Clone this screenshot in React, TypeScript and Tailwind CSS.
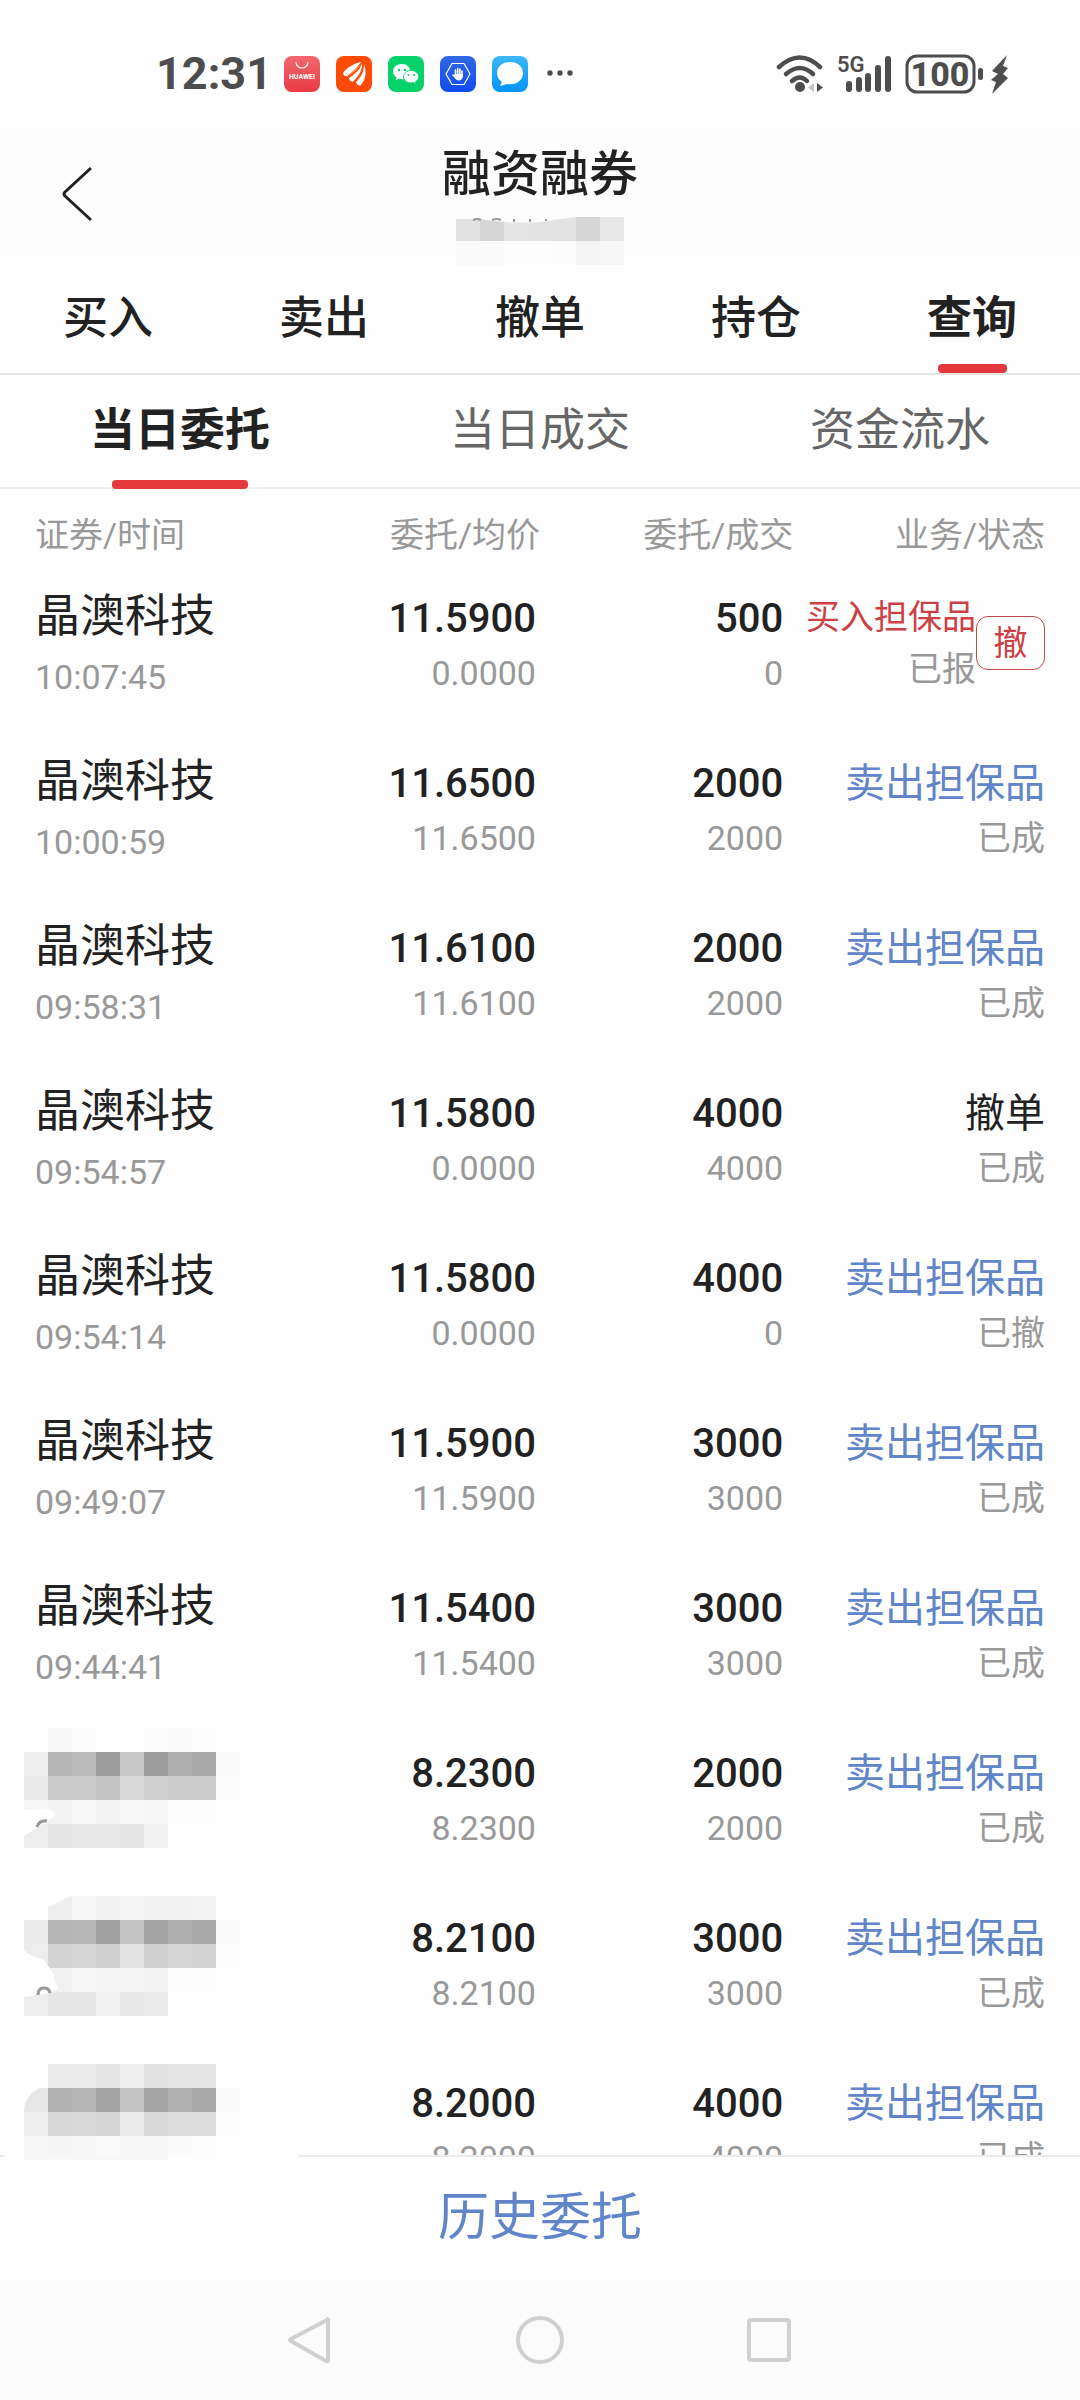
import { useState } from 'react';
import clsx from 'clsx';

type Shade = string | null;

interface Order {
  name: string;
  time: string;
  price: string;
  avgPrice: string;
  amount: string;
  filled: string;
  type: 'buy' | 'sell' | 'cancel';
  status: string;
  mask?: { top: number; rows: Shade[][]; cover: string; arc: string };
}

const TYPE_LABEL = { buy: '买入担保品', sell: '卖出担保品', cancel: '撤单' };

const stock = '晶澳科技';

const orders: Order[] = [
  { name: stock, time: '10:07:45', price: '11.5900', avgPrice: '0.0000', amount: '500', filled: '0', type: 'buy', status: '已报' },
  { name: stock, time: '10:00:59', price: '11.6500', avgPrice: '11.6500', amount: '2000', filled: '2000', type: 'sell', status: '已成' },
  { name: stock, time: '09:58:31', price: '11.6100', avgPrice: '11.6100', amount: '2000', filled: '2000', type: 'sell', status: '已成' },
  { name: stock, time: '09:54:57', price: '11.5800', avgPrice: '0.0000', amount: '4000', filled: '4000', type: 'cancel', status: '已成' },
  { name: stock, time: '09:54:14', price: '11.5800', avgPrice: '0.0000', amount: '4000', filled: '0', type: 'sell', status: '已撤' },
  { name: stock, time: '09:49:07', price: '11.5900', avgPrice: '11.5900', amount: '3000', filled: '3000', type: 'sell', status: '已成' },
  { name: stock, time: '09:44:41', price: '11.5400', avgPrice: '11.5400', amount: '3000', filled: '3000', type: 'sell', status: '已成' },
  {
    name: '',
    time: '',
    price: '8.2300',
    avgPrice: '8.2300',
    amount: '2000',
    filled: '2000',
    type: 'sell',
    status: '已成',
    mask: {
      top: -8,
      rows: [
        [null, '#f8f8f8', '#fbfbfb', null, null, '#fbfbfb', '#fafafa', '#fcfcfc', null],
        ['#ededed', '#b4b4b4', '#bababa', '#9e9e9e', '#c6c6c6', '#9c9c9c', '#aeaeae', '#a8a8a8', '#fafafa'],
        ['#e9e9e9', '#cbcbcb', '#cbcbcb', '#c5c5c5', '#dadada', '#d0d0d0', '#cdcdcd', '#cdcdcd', '#fbfbfb'],
        ['#f6f6f6', '#f3f3f3', '#f8f8f8', '#f4f4f4', '#f8f8f8', '#f6f6f6', '#fcfcfc', '#fcfcfc', null],
        ['#eeeeee', '#e4e4e4', '#e7e7e7', '#e7e7e7', '#e5e5e5', '#f0f0f0', null, null, null],
      ],
      cover: 'M0 82 Q24 83 50 81 L56 87 L46 94 L24 108 L0 120 Z',
      arc: 'M37 99 Q39 92 47 93',
    },
  },
  {
    name: '',
    time: '',
    price: '8.2100',
    avgPrice: '8.2100',
    amount: '3000',
    filled: '3000',
    type: 'sell',
    status: '已成',
    mask: {
      top: -5,
      rows: [
        [null, '#efefef', '#f6f6f6', '#f0f0f0', '#f5f5f5', '#f2f2f2', '#f0f0f0', '#f4f4f4', null],
        ['#ebebeb', '#b4b4b4', '#b8b8b8', '#a1a1a1', '#c4c4c4', '#a2a2a2', '#aeaeae', '#a8a8a8', '#fafafa'],
        ['#ededed', '#d3d3d3', '#d6d6d6', '#d0d0d0', '#e3e3e3', '#d0d0d0', '#d6d6d6', '#d2d2d2', '#fcfcfc'],
        ['#ffffff', '#f1f1f1', '#f6f6f6', '#f5f5f5', '#f5f5f5', '#f3f3f3', '#fdfdfd', '#fdfdfd', null],
        ['#eeeeee', '#e6e6e6', '#e6e6e6', '#f1f1f1', '#e8e8e8', '#ebebeb', null, null, null],
      ],
      cover: 'M0 48 L24 54 Q32 62 43 63 L54 78 L55 86 L58 92 L50 97 L24 101 L0 101 Z M48 11 L70 0 L48 0 Z',
      arc: 'M38 99 Q38 92 44 92 Q49 92 50 97',
    },
  },
  {
    name: '',
    time: '',
    price: '8.2000',
    avgPrice: '8.2000',
    amount: '4000',
    filled: '4000',
    type: 'sell',
    status: '已成',
    mask: {
      top: -2,
      rows: [
        [null, '#ebebeb', '#ebebeb', '#e5e5e5', '#eeeeee', '#e2e2e2', '#e5e5e5', '#e5e5e5', null],
        ['#e7e7e7', '#b2b2b2', '#b6b6b6', '#a3a3a3', '#c4c4c4', '#a5a5a5', '#b0b0b0', '#a9a9a9', '#fafafa'],
        ['#efefef', '#d7d7d7', '#dadada', '#d6d6d6', '#ebebeb', '#dadada', '#dcdcdc', '#dcdcdc', '#fcfcfc'],
        ['#f7f7f7', '#f5f5f5', '#f7f7f7', '#fafafa', '#f6f6f6', '#f7f7f7', '#fafafa', '#fcfcfc', null],
      ],
      cover: 'M20 22 L40 24 Q25 31 24 46 L20 48 Z',
      arc: '',
    },
  },
];

const headerMosaic: Shade[][] = [
  ['#e2e2e2', '#d5d5d5', '#e5e5e5', '#e3e3e3', '#e3e3e3', '#d6d6d6', '#e8e8e8'],
  ['#fafafa', '#fafafa', '#fdfdfd', '#fdfdfd', '#fbfbfb', '#f5f5f5', '#f7f7f7'],
];

function Tiles({ rows, x = 0 }: { rows: Shade[][]; x?: number }) {
  return (
    <>
      {rows.map((row, r) =>
        row.map((fill, c) => fill && <rect key={`${r}-${c}`} x={x + c * 24} y={r * 24} width="24" height="24" fill={fill} />)
      )}
    </>
  );
}

function MaskedName({ mask }: { mask: NonNullable<Order['mask']> }) {
  return (
    <svg className="block overflow-visible" width="240" height="112" viewBox="35 0 240 112" shapeRendering="crispEdges" aria-hidden="true">
      <g transform={`translate(0 ${mask.top})`}>
        <Tiles rows={mask.rows} x={24} />
        <path d={mask.cover} fill="#fff" shapeRendering="auto" />
        <path d={mask.arc} fill="none" stroke="#999" strokeWidth="3" shapeRendering="auto" />
      </g>
    </svg>
  );
}

function StatusBar() {
  return (
    <div className="flex h-[127px] items-center justify-between pt-5 pr-[71px] pl-[156px] text-[#4d4d4d]">
      <div className="flex items-center gap-4">
        <span className="w-28 text-[45px] font-bold leading-none">12:31</span>
        <svg width="36" height="36" viewBox="0 0 36 36">
          <defs>
            <linearGradient id="hw" x2="0" y2="1">
              <stop stopColor="#f0686d" />
              <stop offset="1" stopColor="#ea3b45" />
            </linearGradient>
          </defs>
          <rect width="36" height="36" rx="8" fill="url(#hw)" />
          <path d="M12 6 a6 6 0 0 0 12 0" fill="none" stroke="#fff" strokeWidth="1.2" />
          <text x="18" y="23" fontSize="7" fontWeight="700" fill="#fff" textAnchor="middle">HUAWEI</text>
        </svg>
        <svg width="36" height="36" viewBox="0 0 36 36">
          <rect width="36" height="36" rx="8" fill="#fd4a07" />
          <path d="M25 6 C17 8 10 12 7 17 Q8 21 12 20 C17 17 23 12 25 6Z" fill="#fff" />
          <path d="M26 7 C24 14 19 18 13 22 Q14 27 18 25 C24 20 27 14 26 7Z" fill="#fff" />
          <path d="M28 8 C28 16 25 21 20 26 Q22 31 25 29 C31 22 30 14 28 8Z" fill="#fff" />
          <path d="M25 7 C21 12 18 15 12 20 M27 8 C26 16 22 21 18 25" stroke="#fd4a07" strokeWidth="1" fill="none" />
        </svg>
        <svg width="36" height="36" viewBox="0 0 36 36">
          <rect width="36" height="36" rx="8" fill="#07d169" />
          <path d="M14 8 C9 8 5 11 5 15.500 C5 18 6.500 20 8.500 21.500 L8 24 L11 22.700 Q14 23.500 16 23 L22 14 C21 10 18 8 14 8Z" fill="#fff" />
          <path d="M23 14.500 C18.500 14.500 15.500 17.500 15.500 20.800 C15.500 24.500 19 27 23 27 L25.500 26.600 L28 28 L27.500 25.700 C29.500 24.500 30.800 22.800 30.800 20.800 C30.800 17.500 27.500 14.500 23 14.500Z" fill="#fff" stroke="#07d169" strokeWidth="0.900" />
          <g fill="#07d169">
            <circle cx="11" cy="14" r="1.200" />
            <circle cx="17" cy="14" r="1.200" />
            <circle cx="20.500" cy="19" r="1" />
            <circle cx="26" cy="19" r="1" />
          </g>
        </svg>
        <svg width="36" height="36" viewBox="0 0 36 36">
          <defs>
            <linearGradient id="guard" x2="0" y2="1">
              <stop stopColor="#3267e2" />
              <stop offset="1" stopColor="#104cf0" />
            </linearGradient>
          </defs>
          <rect width="36" height="36" rx="8" fill="url(#guard)" />
          <path d="M12 7.500 H24 L30 18 L24 28.500 H12 L6 18Z" fill="none" stroke="#fff" strokeWidth="1.200" strokeLinejoin="round" />
          <path d="M15.500 14 V20 M17.700 12.500 V20 M19.900 13 V20 M22 15 V20 M13 19 L16 22" stroke="#fff" strokeWidth="1.600" strokeLinecap="round" />
          <path d="M14.700 18 H22.800 V20.500 Q22 24.500 18.800 24.500 Q16 24.500 14 20.500Z" fill="#fff" />
        </svg>
        <svg width="36" height="36" viewBox="0 0 36 36">
          <defs>
            <linearGradient id="msg" x2="0" y2="1">
              <stop stopColor="#3cb8f8" />
              <stop offset="1" stopColor="#0593f7" />
            </linearGradient>
          </defs>
          <rect width="36" height="36" rx="8" fill="url(#msg)" />
          <path d="M18 6 C10.500 6 5 10.500 5 17 C5 21 7 24 10 26 L8 30 L15 28 C24 29.500 31 24.500 31 17 C31 10.500 25.500 6 18 6Z" fill="#fff" />
        </svg>
        <svg width="32" height="36" viewBox="0 0 32 36" fill="currentColor">
          <circle cx="6" cy="17" r="2.700" />
          <circle cx="16" cy="17" r="2.700" />
          <circle cx="26" cy="17" r="2.700" />
        </svg>
      </div>

      <div className="flex items-center gap-[14px]">
        <svg width="48" height="40" viewBox="0 0 48 40" fill="none" stroke="currentColor" strokeWidth="4.500" strokeLinecap="round">
          <path d="M3 13 Q24 -6 44 13" />
          <path d="M10 20 Q24 8 37 20" />
          <path d="M16 27 Q24 20 31 27" />
          <circle cx="24" cy="33" r="5" fill="currentColor" stroke="none" />
          <path d="M38 29 V38 L32 33.500Z" fill="#c4c4c4" stroke="none" />
          <path d="M41 29 V38 L47 33.500Z" fill="currentColor" stroke="none" />
        </svg>
        <svg width="53" height="40" viewBox="0 0 53 40" fill="currentColor">
          <text x="-1" y="18" fontSize="22" fontWeight="600">5G</text>
          <rect x="8" y="27" width="6" height="11" rx="3" />
          <rect x="18" y="23" width="6" height="15" rx="3" />
          <rect x="27" y="19" width="6" height="19" rx="3" />
          <rect x="37" y="11" width="6" height="27" rx="3" />
          <rect x="47" y="2" width="6" height="36" rx="3" />
        </svg>
        <svg width="104" height="40" viewBox="0 0 104 40" fill="currentColor">
          <rect x="2" y="2" width="67" height="36" rx="10" fill="none" stroke="currentColor" strokeWidth="3" />
          <text x="35" y="32" fontSize="34" fontWeight="800" textAnchor="middle">100</text>
          <rect x="73" y="14" width="5" height="12" rx="2.500" />
          <path d="M102 1 L87 17 L93 20 L86 26 L91 28 L87 40 L103 24 L98 20 L103 14 L98 12Z" />
        </svg>
      </div>
    </div>
  );
}

function Header() {
  return (
    <header className="grid h-[131px] grid-cols-3 items-center bg-[#fdfdfd]">
      <button type="button" aria-label="返回" className="justify-self-start pb-1 pl-[60px]">
        <svg width="32" height="56" viewBox="0 0 32 56" fill="none" stroke="#222" strokeWidth="3">
          <path d="M31 2 L5 26 Q3 28 5 30 L31 54" />
        </svg>
      </button>
      <div className="flex flex-col items-center gap-3 self-start pt-[18px]">
        <h1 className="text-[49px] font-medium leading-[60px] text-[#222]">融资融券</h1>
        <svg className="block" width="168" height="48" viewBox="0 0 168 48" shapeRendering="crispEdges" aria-hidden="true">
          <Tiles rows={headerMosaic} />
          <path d="M0 0 H120 Q95 3 84 5 Q50 7 24 2 L0 2Z" fill="#fdfdfd" shapeRendering="auto" />
          <path d="M17 3 Q21 1 25 3 M36 3 Q41 1 45 3 M58 2 V5 M74 2 V5 M90 2 V4" fill="none" stroke="#999" strokeWidth="2" shapeRendering="auto" />
        </svg>
      </div>
    </header>
  );
}

interface TabsProps {
  items: string[];
  active: string;
  onChange: (item: string) => void;
}

function MainTabs({ items, active, onChange }: TabsProps) {
  return (
    <nav className="grid h-[117px] grid-cols-5 border-b-2 border-[#e4e4e4]">
      {items.map((item) => (
        <button
          key={item}
          type="button"
          onClick={() => onChange(item)}
          className={clsx('relative pt-1.5 text-[45px] text-[#222]', item === active ? 'font-bold' : 'font-medium')}
        >
          {item}
          {item === active && <span className="absolute inset-x-0 bottom-0 mx-auto h-[9px] w-[69px] rounded-sm bg-[#e4393c]" />}
        </button>
      ))}
    </nav>
  );
}

function SubTabs({ items, active, onChange }: TabsProps) {
  return (
    <nav className="grid h-[114px] grid-cols-3 border-b-2 border-[#efefef]">
      {items.map((item) => (
        <button
          key={item}
          type="button"
          onClick={() => onChange(item)}
          className={clsx('relative text-[45px]', item === active ? 'font-bold text-[#222]' : 'text-[#666]')}
        >
          {item}
          {item === active && <span className="absolute inset-x-0 -bottom-0.5 mx-auto h-[9px] w-[136px] rounded-sm bg-[#e4393c]" />}
        </button>
      ))}
    </nav>
  );
}

function OrderRow({ order }: { order: Order }) {
  const pending = order.type === 'buy';
  return (
    <tr className="h-[165px] align-top">
      <td className="pl-[35px]">
        {order.mask ? (
          <MaskedName mask={order.mask} />
        ) : (
          <div className="pt-1.5">
            <div className="text-[45px] leading-[60px] text-[#222]">{order.name}</div>
            <div className="text-[34px] leading-[60px] text-[#999]">{order.time}</div>
          </div>
        )}
      </td>
      <td className="pt-2.5 pr-1 text-right">
        <div className="text-[40px] font-medium leading-[56px] text-[#222]">{order.price}</div>
        <div className="text-[34px] leading-[52px] text-[#999]">{order.avgPrice}</div>
      </td>
      <td className="pt-2.5 pr-4 text-right">
        <div className="text-[40px] font-medium leading-[56px] text-[#222]">{order.amount}</div>
        <div className="text-[34px] leading-[52px] text-[#999]">{order.filled}</div>
      </td>
      <td className="pt-2.5 pr-[35px] text-right whitespace-nowrap">
        {pending ? (
          <div className="flex items-center justify-end">
            <div className="text-[34px] leading-[52px]">
              <div className="text-[#cb4144]">{TYPE_LABEL[order.type]}</div>
              <div className="text-[#999]">{order.status}</div>
            </div>
            <button type="button" className="h-[54px] w-[69px] shrink-0 rounded-xl border border-[#c24a4d] text-[34px] leading-none text-[#cb4144]">
              撤
            </button>
          </div>
        ) : (
          <>
            <div className={clsx('text-[40px] leading-[56px]', order.type === 'sell' ? 'text-[#6085c8]' : 'text-[#222]')}>
              {TYPE_LABEL[order.type]}
            </div>
            <div className="text-[34px] leading-[52px] text-[#999]">{order.status}</div>
          </>
        )}
      </td>
    </tr>
  );
}

function NavigationBar() {
  return (
    <div className="flex h-[120px] shrink-0 items-center justify-center gap-[182px] bg-[#fbfbfb]">
      <button type="button" aria-label="返回">
        <svg width="48" height="48" viewBox="0 0 48 48" fill="none" stroke="#d0d0d0" strokeWidth="4" strokeLinejoin="round">
          <path d="M41 4 Q42 2 42 5 V43 Q42 46 40 45 L5 25 Q3 24 5 23Z" />
        </svg>
      </button>
      <button type="button" aria-label="主页">
        <svg width="48" height="48" viewBox="0 0 48 48" fill="none" stroke="#d0d0d0" strokeWidth="4">
          <circle cx="24" cy="24" r="22" />
        </svg>
      </button>
      <button type="button" aria-label="最近任务">
        <svg width="48" height="48" viewBox="0 0 48 48" fill="none" stroke="#d0d0d0" strokeWidth="4">
          <rect x="3" y="4" width="40" height="40" rx="2" />
        </svg>
      </button>
    </div>
  );
}

export default function App() {
  const [tab, setTab] = useState('查询');
  const [subTab, setSubTab] = useState('当日委托');

  return (
    <div className="flex h-screen flex-col bg-[#fefefe] font-['Roboto','Noto_Sans_CJK_SC',sans-serif]">
      <StatusBar />
      <Header />
      <MainTabs items={['买入', '卖出', '撤单', '持仓', '查询']} active={tab} onChange={setTab} />
      <SubTabs items={['当日委托', '当日成交', '资金流水']} active={subTab} onChange={setSubTab} />

      <main className="min-h-0 flex-1 overflow-hidden">
        <table className="w-full table-fixed">
          <thead>
            <tr className="h-[92px] text-[34px] text-[#999]">
              <th className="w-[27%] pl-[35px] text-left font-normal">证券/时间</th>
              <th className="w-[23%] text-right font-normal">委托/均价</th>
              <th className="w-[24%] pr-1.5 text-right font-normal">委托/成交</th>
              <th className="pr-[35px] text-right font-normal">业务/状态</th>
            </tr>
          </thead>
          <tbody>
            {orders.map((order, i) => (
              <OrderRow key={i} order={order} />
            ))}
          </tbody>
        </table>
      </main>

      <footer className="relative h-[125px] shrink-0 border-t-2 border-[#ebebeb] bg-white">
        <svg className="absolute -top-0.5 left-0" width="300" height="6" aria-hidden="true">
          <rect x="4" width="294" height="6" fill="#fdfdfd" />
          <rect x="24" width="144" height="5" fill="#f7f7f7" />
        </svg>
        <button type="button" className="size-full text-[51px] text-[#6085c8]">
          历史委托
        </button>
      </footer>
      <NavigationBar />
    </div>
  );
}
